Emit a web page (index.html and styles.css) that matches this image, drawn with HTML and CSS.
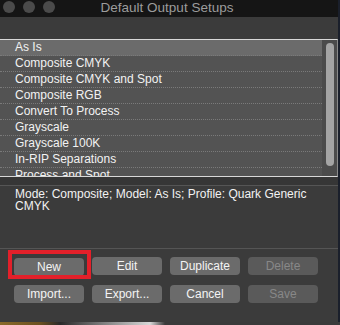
FILE: index.html
```html
<!DOCTYPE html>
<html lang="en">
<head>
<meta charset="UTF-8">
<title>Default Output Setups</title>
<link rel="stylesheet" href="styles.css">
</head>
<body>
<div class="window">
<!-- Title Bar -->
<div class="titlebar">
<div class="lights">
<span class="light"></span>
<span class="light"></span>
<span class="light"></span>
</div>
<div class="title">Default Output Setups</div>
</div>

<!-- Setups List -->
<div class="list">
<ul class="rows">
<li class="selected">As Is</li>
<li>Composite CMYK</li>
<li>Composite CMYK and Spot</li>
<li>Composite RGB</li>
<li>Convert To Process</li>
<li>Grayscale</li>
<li>Grayscale 100K</li>
<li>In-RIP Separations</li>
<li>Process and Spot</li>
</ul>
<div class="scroll"><div class="thumb"></div></div>
</div>

<!-- Description -->
<div class="gap"></div>
<div class="desc">Mode: Composite; Model: As Is; Profile: Quark Generic CMYK</div>

<!-- Buttons -->
<div class="buttons">
<div class="mark-wrap">
<button class="btn">New</button>
<span class="mark"></span>
</div>
<button class="btn">Edit</button>
<button class="btn">Duplicate</button>
<button class="btn disabled">Delete</button>
<button class="btn">Import...</button>
<button class="btn">Export...</button>
<button class="btn">Cancel</button>
<button class="btn disabled">Save</button>
</div>
</div>
<div class="desktop"></div>
</body>
</html>
```

FILE: styles.css
```css
body {
font-family: "Liberation Sans", Arial, sans-serif;
margin: 0;
padding: 0;
width: 340px;
height: 325px;
overflow: hidden;
background-color: #1a1f2b;
}
.window {
width: 338px;
height: 322px;
background-color: #3b3b3b;
}
.titlebar {
position: relative;
height: 17px;
background-color: #151515;
display: flex;
align-items: center;
justify-content: center;
}
.lights {
position: absolute;
left: 3px;
top: 1px;
display: flex;
gap: 8px;
}
.light {
width: 12px;
height: 12px;
border-radius: 50%;
background-color: #4b4b4b;
}
.title {
color: #9c9c9c;
font-size: 13.5px;
margin-left: -4px;
margin-top: -2px;
}

.list {
margin-top: 22px;
height: 136px;
display: flex;
background-color: #535353;
border-top: 1px solid #d8d8d8;
border-bottom: 1px solid #d8d8d8;
border-right: 1px solid #8a8a8a;
overflow: hidden;
}
.rows {
list-style: none;
margin: 0;
padding: 0;
flex: 1;
}
.rows li {
height: 15px;
line-height: 15px;
padding-left: 15px;
font-size: 12px;
color: #f2f2f2;
border-bottom: 1px dotted #7a7a7a;
}
.rows li.selected {
background-color: #6b6b6b;
}
.scroll {
width: 15px;
background-color: #4b4b4b;
padding-top: 3px;
}
.thumb {
width: 8px;
height: 123px;
margin-left: 4px;
border-radius: 4px;
background-color: #a4a4a4;
}

.gap {
height: 8px;
background-color: #363636;
}
.desc {
height: 54px;
padding: 2px 15px 6px 15px;
border-top: 1px solid #555;
border-bottom: 1px solid #555;
color: #f2f2f2;
font-size: 12px;
line-height: 12px;
}

.buttons {
display: grid;
grid-template-columns: repeat(4, 70px);
grid-auto-rows: 18px;
column-gap: 8px;
row-gap: 10px;
padding: 8px 0 0 14px;
}
.btn {
width: 70px;
height: 18px;
padding: 0;
border: none;
border-radius: 4px;
background-color: #6b6b6b;
color: #f4f4f4;
font-family: "Liberation Sans", Arial, sans-serif;
font-size: 12px;
}
.btn.disabled {
background-color: #5a5a5a;
color: #888;
}
.mark-wrap {
position: relative;
}
.mark {
position: absolute;
left: -6px;
top: -7px;
width: 75px;
height: 21px;
border: 4px solid #e3202a;
}
.desktop {
height: 3px;
background: linear-gradient(to right, #8a6a2a 0, #6b5020 40px, #2a2a2a 60px, #d8d8d8 150px, #3a3a3a 165px, #3a3a3a 340px);
}
```
